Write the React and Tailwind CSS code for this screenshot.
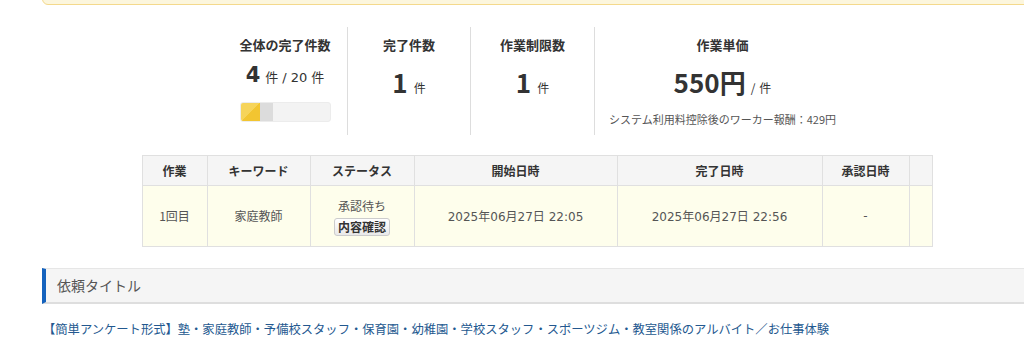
import React from "react";

const cjk = "font-['Noto_Sans_CJK_JP',sans-serif]";

function StatTitle({ children }) {
  return (
    <div className="h-[19px] leading-[19px] text-[13px] font-bold text-[#333] font-['Noto_Sans_CJK_JP',sans-serif]">
      {children}
    </div>
  );
}

function BigCount({ value, unit }) {
  return (
    <div className="mt-[12px] h-[32px] leading-[32px] flex items-baseline font-['Noto_Sans_CJK_JP',sans-serif]">
      <span className="text-[26px] font-bold">{value}</span>
      <span className="ml-[6px] text-[12px]">{unit}</span>
    </div>
  );
}

function DateCell({ time }) {
  return (
    <td className="border border-[#e0e0e0] text-center">
      2025<span className="font-['Noto_Sans_CJK_JP',sans-serif]">年</span>06
      <span className="font-['Noto_Sans_CJK_JP',sans-serif]">月</span>27
      <span className="font-['Noto_Sans_CJK_JP',sans-serif]">日</span> {time}
    </td>
  );
}

export default function App() {
  const heads = ["作業", "キーワード", "ステータス", "開始日時", "完了日時", "承認日時", ""];
  return (
    <div className="w-[1024px] h-[339px] overflow-hidden bg-white text-[#333] font-['DejaVu_Sans','Noto_Sans_CJK_JP',sans-serif]">
      <div className="ml-[42px] mt-[-20px] h-[25px] w-[1000px] rounded-[6px] border border-[#f4d98c] bg-[#fcf6dd]" />
      <div className="ml-[42px] w-[990px] flex flex-col">
        {/* stats */}
        <div className="mt-[22px] ml-[181px] flex">
          <div className="w-[124px] h-[108px] flex flex-col items-center pt-[8px]">
            <StatTitle>全体の完了件数</StatTitle>
            <div className="mt-[8px] h-[26px] leading-[26px] flex items-baseline text-[13px] text-[#333]">
              <span className="text-[21px] font-bold">4</span>
              <span className="ml-[5px] font-['Noto_Sans_CJK_JP',sans-serif]">件</span>
              <span className="ml-[4px]">/ 20</span>
              <span className="ml-[4px] font-['Noto_Sans_CJK_JP',sans-serif]">件</span>
            </div>
            <div className="mt-[14px] h-[20px] w-[91px] rounded-[3px] bg-[#f3f3f3] border border-[#ececec] flex overflow-hidden">
              <div className="w-[19px] h-full bg-[linear-gradient(135deg,#f6d45a_50%,#f2c531_50%)]" />
              <div className="w-[13px] h-full bg-[#dcdcdc]" />
            </div>
          </div>
          <div className="w-[123px] h-[108px] border-l border-[#dddddd] flex flex-col items-center pt-[8px]">
            <StatTitle>完了件数</StatTitle>
            <BigCount value="1" unit="件" />
          </div>
          <div className="w-[124px] h-[108px] border-l border-[#dddddd] flex flex-col items-center pt-[8px]">
            <StatTitle>作業制限数</StatTitle>
            <BigCount value="1" unit="件" />
          </div>
          <div className="w-[256px] h-[108px] border-l border-[#dddddd] flex flex-col items-center pt-[8px]">
            <StatTitle>作業単価</StatTitle>
            <div className="mt-[12px] h-[32px] leading-[32px] flex items-baseline font-['Noto_Sans_CJK_JP',sans-serif]">
              <span className="text-[26px] font-bold">550円</span>
              <span className="ml-[5px] text-[12px]">/</span>
              <span className="ml-[4px] text-[12px]">件</span>
            </div>
            <div className="mt-[13px] h-[16px] leading-[16px] text-[11px] text-[#555] font-['Noto_Sans_CJK_JP',sans-serif]">
              システム利用料控除後のワーカー報酬：429円
            </div>
          </div>
        </div>

        {/* table */}
        <div className="mt-[20px] flex justify-center">
          <table className="border-collapse border border-[#e0e0e0] text-[12px] table-fixed w-[790px]">
            <colgroup>
              <col className="w-[65px]" />
              <col className="w-[103px]" />
              <col className="w-[104px]" />
              <col className="w-[203px]" />
              <col className="w-[205px]" />
              <col className="w-[87px]" />
              <col className="w-[23px]" />
            </colgroup>
            <thead>
              <tr className="h-[30px] bg-[#f5f5f5]">
                {heads.map((h, i) => (
                  <th key={i} className="border border-[#e0e0e0] font-bold text-[#333] text-center p-0 font-['Noto_Sans_CJK_JP',sans-serif]">
                    {h}
                  </th>
                ))}
              </tr>
            </thead>
            <tbody>
              <tr className="h-[61px] bg-[#fefeec] text-[#555]">
                <td className={`border border-[#e0e0e0] text-center ${cjk}`}>1回目</td>
                <td className="border border-[#e0e0e0] text-center font-['Noto_Sans_CJK_JP',sans-serif]">家庭教師</td>
                <td className="border border-[#e0e0e0] text-center">
                  <div className="flex flex-col items-center font-['Noto_Sans_CJK_JP',sans-serif]">
                    <div className="h-[18px] leading-[18px]">承認待ち</div>
                    <button className="mt-[3px] h-[18px] px-[3px] leading-[16px] rounded-[3px] border border-[#cccccc] bg-[linear-gradient(#ffffff,#e9e9e9)] text-[12px] font-bold text-[#333]">
                      内容確認
                    </button>
                  </div>
                </td>
                <DateCell time="22:05" />
                <DateCell time="22:56" />
                <td className="border border-[#e0e0e0] text-center">-</td>
                <td className="border border-[#e0e0e0]"></td>
              </tr>
            </tbody>
          </table>
        </div>

        {/* heading */}
        <div className="mt-[21px] h-[36px] w-[1000px] flex items-center bg-[#f5f5f5] border-t border-t-[#e6e6e6] border-b-2 border-b-[#dedede] border-l-4 border-l-[#1462bd] pl-[11px]">
          <span className="text-[14px] text-[#555] font-['Noto_Sans_CJK_JP',sans-serif]">依頼タイトル</span>
        </div>

        <div className="mt-[17px] ml-[1px] h-[17px] leading-[17px] text-[12.3px] text-[#23588f] whitespace-nowrap font-['Noto_Sans_CJK_JP',sans-serif]">
          【簡単アンケート形式】塾・家庭教師・予備校スタッフ・保育園・幼稚園・学校スタッフ・スポーツジム・教室関係のアルバイト／お仕事体験
        </div>
      </div>
    </div>
  );
}
